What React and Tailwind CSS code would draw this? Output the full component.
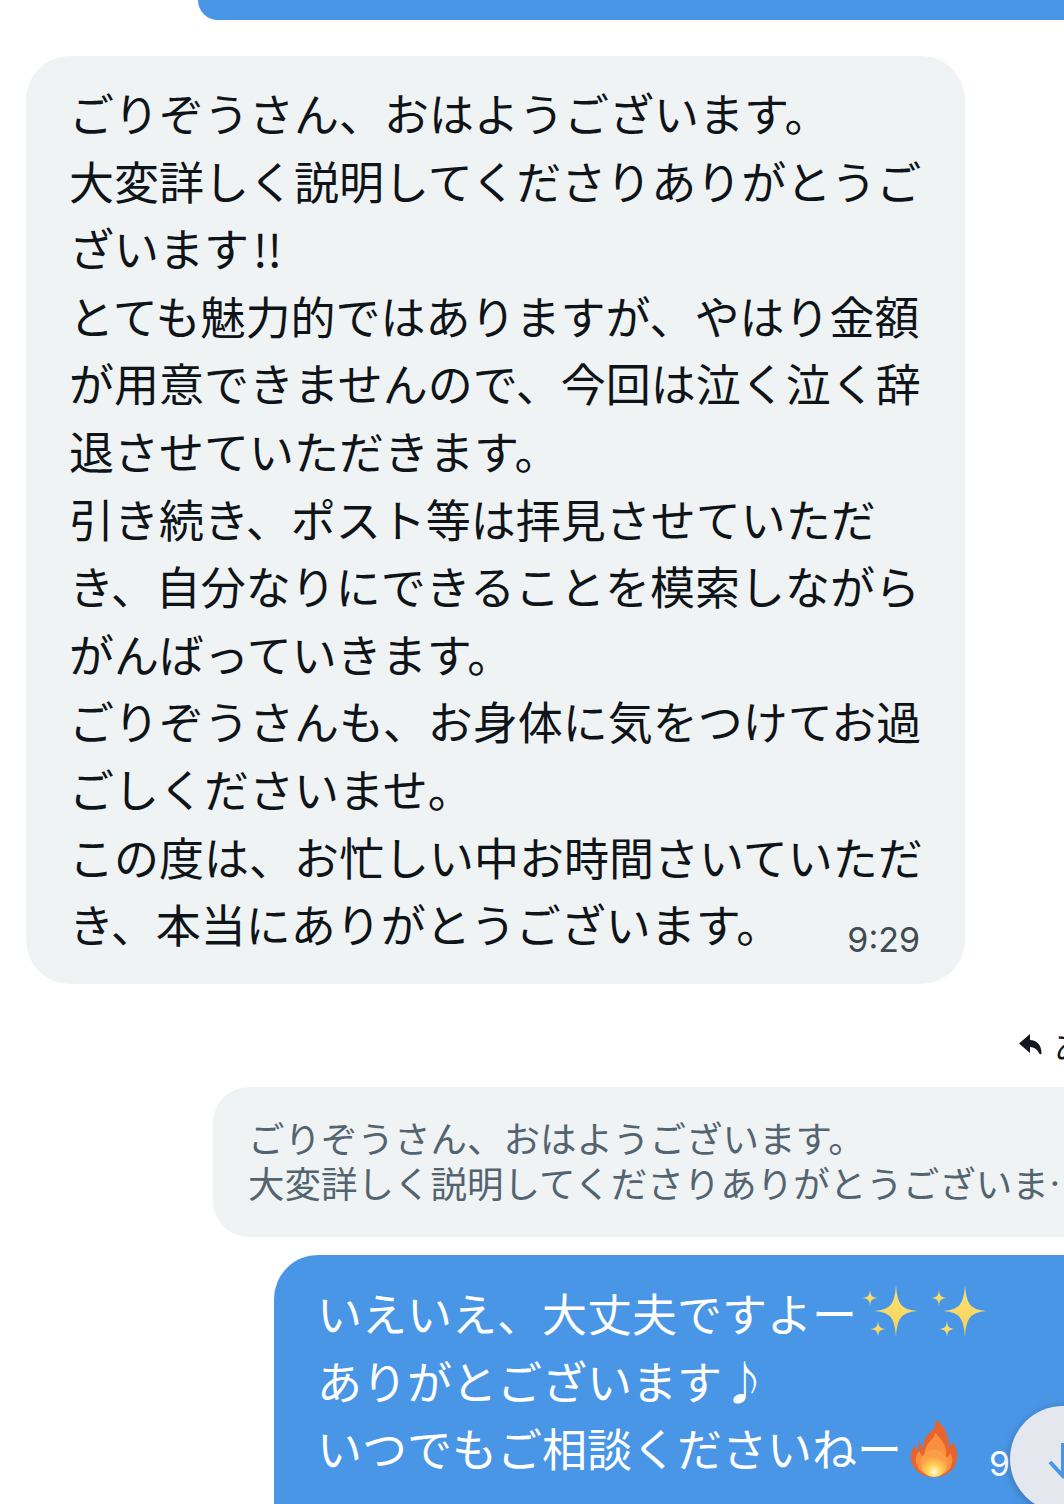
import React from "react";

const font = { fontFamily: '"Noto Sans CJK JP", "Noto Sans", sans-serif' };

const grayLines = [
  "ごりぞうさん、おはようございます。",
  "大変詳しく説明してくださりありがとうご",
  <>ざいます<span className="ml-[4px]">!!</span></>,
  "とても魅力的ではありますが、やはり金額",
  "が用意できませんので、今回は泣く泣く辞",
  "退させていただきます。",
  "引き続き、ポスト等は拝見させていただ",
  "き、自分なりにできることを模索しながら",
  "がんばっていきます。",
  "ごりぞうさんも、お身体に気をつけてお過",
  "ごしくださいませ。",
  "この度は、お忙しい中お時間さいていただ",
  "き、本当にありがとうございます。",
];

function Sparkle({ className }) {
  const star = "M0-10C.7-2.500 2.500-.7 10 0 2.500.7.7 2.500 0 10-.7 2.500-2.500.7-10 0-2.500-.7-.7-2.500 0-10Z";
  return (
    <svg viewBox="0 0 56 56" className={className}>
      <defs>
        <linearGradient id="gold" x1="0" y1="0" x2="0" y2="1">
          <stop offset="0%" stopColor="#fde27a" />
          <stop offset="100%" stopColor="#f8d052" />
        </linearGradient>
      </defs>
      <g fill="url(#gold)">
        <path d={star} transform="translate(35 26) scale(2.1 2.6)" />
        <path d={star} transform="translate(9 13) scale(.8)" />
        <path d={star} transform="translate(17 44) scale(.8)" />
      </g>
    </svg>
  );
}

function Fire({ className }) {
  return (
    <svg viewBox="0 0 50 60" className={className}>
      <defs>
        <radialGradient id="core" cx="50%" cy="80%" r="55%">
          <stop offset="0%" stopColor="#fffde0" />
          <stop offset="40%" stopColor="#ffd75a" />
          <stop offset="100%" stopColor="#fa9f45" />
        </radialGradient>
      </defs>
      <path fill="#e8642c" d="M25 59C11 59 1 50 1 38c0-5 2-9 5-12 0 3 1 5 3 6 0-3-1-7 1-10 1 3 2 6 4 7 0-9 3-13 8-17 4-3 5-7 4-12 5 2 10 8 12 14 2 5 2 9 2 13 2 0 3-2 3-5 4 4 6 10 6 15 0 13-10 22-24 22Z" />
      <path fill="#f89040" d="M25 58C14 58 6 50 6 41c0-4 2-7 4-9 1 3 2 5 5 6 0-7 2-12 6-16 3-3 5-6 5-9 4 4 9 10 11 16 1 4 1 7 0 10 2 0 4-2 5-5 1 2 2 5 2 8 0 9-8 16-19 16Z" />
      <ellipse cx="25" cy="45" rx="14" ry="14" fill="url(#core)" />
    </svg>
  );
}

export default function App() {
  return (
    <div className="relative w-[1064px] h-[1504px] overflow-hidden bg-white flex flex-col text-[45px] leading-[67.6px]" style={font}>
      <div className="ml-[198px] w-[900px] h-[20px] shrink-0 bg-[#4a96e6] rounded-b-[44px]" />

      <div className="relative ml-[26px] mt-[36px] w-[939px] h-[928px] shrink-0 bg-[#eff3f4] rounded-[44px] pl-[43px] pt-[23px] text-[#0f1419]">
        {grayLines.map((l, i) => (
          <div key={i} className="whitespace-nowrap">{l}</div>
        ))}
        <span className="absolute right-[45px] bottom-[24px] text-[34px] leading-[40px] text-[#3f4a53]" style={{ fontFamily: 'Inter, sans-serif' }}>9:29</span>
      </div>

      <div className="mt-[41px] ml-[1018px] h-[40px] shrink-0 flex items-center gap-[12px] whitespace-nowrap text-[#0f1419]">
        <svg viewBox="0 0 24 22" className="w-[24px] h-[22px] shrink-0" fill="#14171f">
          <path d="M12 0 1 9.500 12 19v-6c4 0 7 2 9 6 .7 1.500 2.500 2 2.500 0C23.500 11 19 6.500 12 6Z" />
        </svg>
        <span className="text-[33px] leading-[40px]">あなた</span>
      </div>

      <div className="mt-[22px] ml-[213px] w-[900px] h-[150px] shrink-0 bg-[#eff3f4] rounded-[36px] pl-[35px] pt-[28px] text-[36.5px] leading-[45px] text-[#536471] whitespace-nowrap">
        <div>ごりぞうさん、おはようございます。</div>
        <div>大変詳しく説明してくださりありがとうございま…</div>
      </div>

      <div className="mt-[18px] ml-[274px] w-[840px] h-[300px] shrink-0 bg-[#4a96e6] rounded-[44px] pl-[43px] pt-[24px] text-white whitespace-nowrap">
        <div className="flex items-center h-[67.6px]">いえいえ、大丈夫ですよー<Sparkle className="w-[56px] h-[56px] ml-[4px]" /><Sparkle className="w-[56px] h-[56px] ml-[13px]" /></div>
        <div>ありがとございます♪</div>
        <div className="flex items-center h-[67.6px]">いつでもご相談くださいねー<Fire className="w-[50px] h-[58px] ml-[7px] mt-[2px]" /><span className="ml-[30px] self-end text-[34px] leading-[36px]" style={{ fontFamily: 'Inter, sans-serif' }}>9:29</span></div>
      </div>

      <div className="absolute left-[1010px] top-[1406px] w-[106px] h-[106px] rounded-full bg-[#e4e8ee] shadow-[0_2px_10px_rgba(0,0,0,0.25)]">
        <svg viewBox="0 0 30 36" className="absolute left-[38px] top-[37px] w-[30px] h-[36px]" fill="none" stroke="#4a96e6" strokeWidth="4">
          <path d="M15 0V33M2 19 15 33 28 19" />
        </svg>
      </div>
    </div>
  );
}
